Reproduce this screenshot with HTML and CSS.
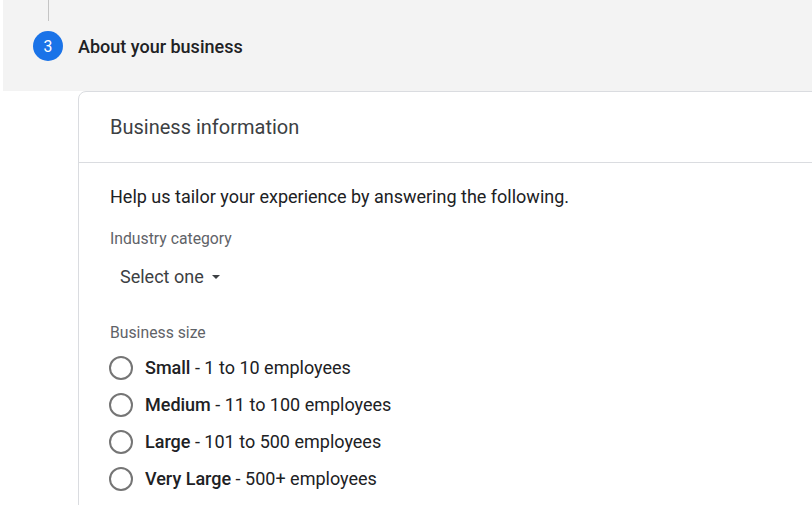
FILE: index.html
```html
<!DOCTYPE html>
<html>
<head>
<meta charset="utf-8">
<link rel="stylesheet" href="styles.css">
</head>
<body>
<div class="page">
  <section class="step">
    <div class="step-line"></div>
    <div class="step-row">
      <span class="step-num">3</span>
      <span class="step-title">About your business</span>
    </div>
  </section>
  <section class="card">
    <header class="card-header">Business information</header>
    <div class="card-body">
      <p class="intro">Help us tailor your experience by answering the following.</p>
      <div class="field-label">Industry category</div>
      <button class="select">Select one <span class="caret"></span></button>
      <div class="field-label size-label">Business size</div>
      <div class="radios">
        <label class="radio"><span class="ring"></span><span class="radio-text"><b>Small</b> - 1 to 10 employees</span></label>
        <label class="radio"><span class="ring"></span><span class="radio-text"><b>Medium</b> - 11 to 100 employees</span></label>
        <label class="radio"><span class="ring"></span><span class="radio-text"><b>Large</b> - 101 to 500 employees</span></label>
        <label class="radio"><span class="ring"></span><span class="radio-text"><b>Very Large</b> - 500+ employees</span></label>
      </div>
    </div>
  </section>
</div>
</body>
</html>
```

FILE: styles.css
```css
html, body {
  margin: 0;
  padding: 0;
  background: #ffffff;
  overflow: hidden;
}
body {
  font-family: Roboto, "Liberation Sans", Arial, sans-serif;
  color: #202124;
  width: 812px;
  height: 505px;
}
.page {
  width: 812px;
  height: 505px;
  overflow: hidden;
}
.step {
  margin-left: 3px;
  height: 91px;
  background: #f3f3f3;
  box-sizing: border-box;
}
.step-line {
  width: 1px;
  height: 21px;
  margin-left: 45px;
  background: #c4c4c4;
}
.step-row {
  display: flex;
  align-items: center;
  padding-left: 30px;
  padding-top: 10px;
}
.step-num {
  width: 30px;
  height: 30px;
  border-radius: 50%;
  background: #1a73e8;
  color: #ffffff;
  font-size: 15.75px;
  display: flex;
  align-items: center;
  justify-content: center;
}
.step-title {
  margin-left: 15px;
  font-size: 18px;
  font-weight: 500;
  color: #202124;
}
.card {
  margin-left: 78px;
  width: 800px;
  border: 1px solid #dadce0;
  border-top-left-radius: 8px;
  height: 500px;
  box-sizing: border-box;
}
.card-header {
  height: 70px;
  border-bottom: 1px solid #dadce0;
  padding-left: 31px;
  display: flex;
  align-items: center;
  font-size: 20px;
  color: #3c4043;
}
.card-body {
  padding: 20px 31px 0;
}
.intro {
  margin: 0;
  font-size: 18px;
  line-height: 28px;
  color: #202124;
}
.field-label {
  margin-top: 17px;
  font-size: 15.75px;
  line-height: 22px;
  color: #5f6368;
}
.select {
  display: flex;
  align-items: center;
  margin-top: 13px;
  padding: 0 0 0 10px;
  border: none;
  background: transparent;
  font-family: inherit;
  font-size: 18px;
  line-height: 28px;
  color: #3c4043;
}
.caret {
  margin-left: 8px;
  width: 0;
  height: 0;
  border-left: 4.5px solid transparent;
  border-right: 4.5px solid transparent;
  border-top: 4.5px solid #3c4043;
}
.size-label {
  margin-top: 31px;
}
.radios {
  margin-top: 5px;
  display: flex;
  flex-direction: column;
}
.radio {
  display: flex;
  align-items: center;
  height: 37px;
}
.ring {
  width: 24px;
  height: 24px;
  border: 2px solid #757575;
  border-radius: 50%;
  box-sizing: border-box;
  margin-left: -1px;
}
.radio-text {
  margin-left: 12px;
  font-size: 18px;
  line-height: 28px;
  color: #202124;
}
.radio-text b {
  font-weight: 500;
}
```
